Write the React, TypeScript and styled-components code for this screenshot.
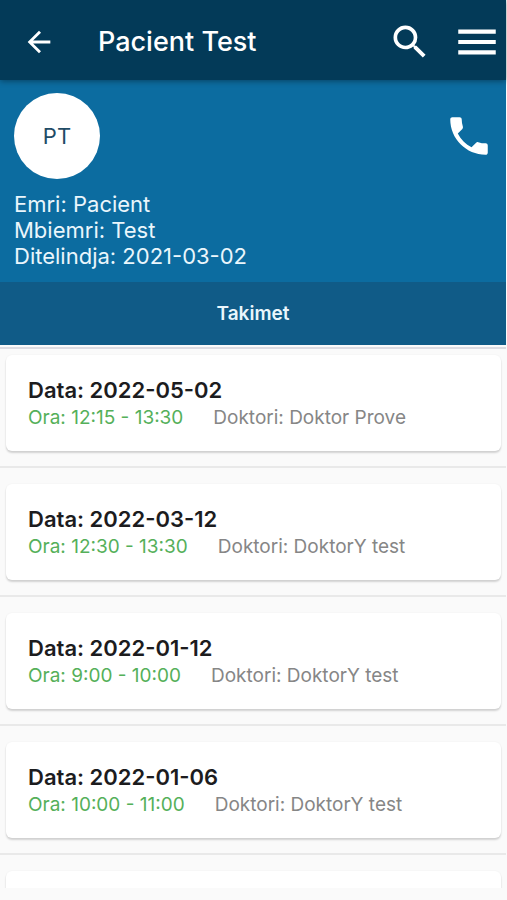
import React from 'react';
import styled, { createGlobalStyle } from 'styled-components';
import { MdArrowBack, MdMenu, MdPhone, MdSearch } from 'react-icons/md';

const GlobalStyle = createGlobalStyle`
  *, *::before, *::after { box-sizing: border-box; }
  body {
    margin: 0;
    background: #fafafa;
    font-family: Inter, Roboto, 'Liberation Sans', sans-serif;
    color: #1c1c1e;
  }
`;

const Screen = styled.div`
  display: flex;
  flex-direction: column;
  height: 100vh;
  padding: 0 1px 12px 0;
  overflow: hidden;
`;

const AppBar = styled.header`
  position: relative;
  z-index: 1;
  flex: none;
  display: flex;
  align-items: center;
  height: 80px;
  padding: 4px 4px 0 22px;
  background: #033a58;
  color: #fff;
  box-shadow: 0 1px 6px rgba(0, 0, 0, 0.4);
`;

const IconButton = styled.button`
  display: flex;
  align-items: center;
  justify-content: center;
  padding: 0;
  border: 0;
  background: none;
  color: #fff;
  cursor: pointer;
`;

const Title = styled.h1`
  flex: 1;
  margin: 0 0 0 42px;
  font-size: 27px;
  line-height: 32px;
  font-weight: 500;
`;

const Actions = styled.div`
  display: flex;
  align-items: center;
  gap: 20px;
`;

const Profile = styled.section`
  flex: none;
  padding: 13px 12px 13px 14px;
  background: #0c6ca0;
  color: #eaf6fc;
`;

const ProfileTop = styled.div`
  display: flex;
  align-items: center;
  justify-content: space-between;
`;

const Avatar = styled.div`
  display: flex;
  align-items: center;
  justify-content: center;
  width: 86px;
  height: 86px;
  border-radius: 50%;
  background: #fff;
  color: #1f4c66;
  font-size: 22px;
`;

const Details = styled.div`
  margin-top: 12px;
  font-size: 22px;
  line-height: 26px;
`;

const DetailLine = styled.p`
  margin: 0;
`;

const Tabs = styled.nav`
  flex: none;
  display: flex;
  height: 63px;
  background: #105b87;
`;

const Tab = styled.button`
  flex: 1;
  border: 0;
  padding: 0;
  background: none;
  color: #eaf6fc;
  font: inherit;
  font-size: 19px;
  font-weight: 600;
  cursor: pointer;
`;

const List = styled.ul`
  flex: 1;
  min-height: 0;
  margin: 0;
  padding: 2px 0 0;
  overflow: hidden;
  list-style: none;
`;

const Item = styled.li<{ $first?: boolean }>`
  padding: ${(p) => (p.$first ? '6px' : '16px')} 5px 15px 6px;
  border-top: 2px solid ${(p) => (p.$first ? '#dcdce2' : '#e9e9e9')};
`;

const Card = styled.article`
  min-height: 96px;
  padding: 21px 22px 19px;
  border-radius: 6px;
  background: #fff;
  box-shadow: 0 2px 2px rgba(0, 0, 0, 0.16), 0 0 2px rgba(0, 0, 0, 0.05);
`;

const DateLine = styled.h2`
  margin: 0;
  font-size: 22px;
  line-height: 28px;
  font-weight: 600;
`;

const Meta = styled.div`
  display: flex;
  gap: 30px;
  font-size: 19px;
  line-height: 28px;
  white-space: nowrap;
`;

const Time = styled.span`
  color: #55b05a;
`;

const Doctor = styled.span`
  color: #868686;
`;

const appointments = [
  { date: '2022-05-02', time: '12:15 - 13:30', doctor: 'Doktor Prove' },
  { date: '2022-03-12', time: '12:30 - 13:30', doctor: 'DoktorY test' },
  { date: '2022-01-12', time: '9:00 - 10:00', doctor: 'DoktorY test' },
  { date: '2022-01-06', time: '10:00 - 11:00', doctor: 'DoktorY test' },
];

export default function App() {
  return (
    <>
      <GlobalStyle />
      <Screen>
        <AppBar>
          <IconButton aria-label="Back">
            <MdArrowBack size={34} />
          </IconButton>
          <Title>Pacient Test</Title>
          <Actions>
            <IconButton aria-label="Search">
              <MdSearch size={44} />
            </IconButton>
            <IconButton aria-label="Menu">
              <MdMenu size={50} />
            </IconButton>
          </Actions>
        </AppBar>
        <Profile>
          <ProfileTop>
            <Avatar>PT</Avatar>
            <IconButton aria-label="Call">
              <MdPhone size={50} />
            </IconButton>
          </ProfileTop>
          <Details>
            <DetailLine>Emri: Pacient</DetailLine>
            <DetailLine>Mbiemri: Test</DetailLine>
            <DetailLine>Ditelindja: 2021-03-02</DetailLine>
          </Details>
        </Profile>
        <Tabs>
          <Tab>Takimet</Tab>
        </Tabs>
        <List>
          {appointments.map((a, i) => (
            <Item key={a.date} $first={i === 0}>
              <Card>
                <DateLine>Data: {a.date}</DateLine>
                <Meta>
                  <Time>Ora: {a.time}</Time>
                  <Doctor>Doktori: {a.doctor}</Doctor>
                </Meta>
              </Card>
            </Item>
          ))}
          <Item>
            <Card />
          </Item>
        </List>
      </Screen>
    </>
  );
}
